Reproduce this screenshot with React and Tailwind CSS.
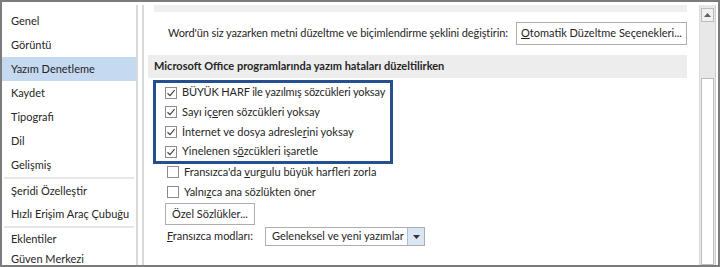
import React from "react";

const font = { fontFamily: 'Lato, "Noto Sans", sans-serif' };

const navGroups = [
  ["Genel", "Görüntü", "Yazım Denetleme", "Kaydet", "Tipografi", "Dil", "Gelişmiş"],
  ["Şeridi Özelleştir", "Hızlı Erişim Araç Çubuğu"],
  ["Eklentiler", "Güven Merkezi"],
];

function Check({ checked }) {
  return (
    <span className="w-[12px] h-[12px] border border-[#8c8c8c] bg-white flex items-center justify-center shrink-0">
      {checked && (
        <svg width="10" height="10" viewBox="0 0 10 10">
          <path d="M1.5 5.2 L4 7.6 L8.6 2.2" fill="none" stroke="#444" strokeWidth="1.2" />
        </svg>
      )}
    </span>
  );
}

function Row({ checked, h = "h-[20px]", children }) {
  return (
    <div className={`flex items-center gap-[5px] ${h} whitespace-nowrap`}>
      <Check checked={checked} />
      <span>{children}</span>
    </div>
  );
}

export default function App() {
  return (
    <div
      style={font}
      className="w-[720px] h-[267px] border-2 border-[#7c7c7c] bg-white flex pt-[3px] text-[11px] text-[#262626] overflow-hidden whitespace-nowrap"
    >
      {/* sidebar */}
      <div className="w-[136px] border-r-2 border-[#d9d9d9] pt-[4px] shrink-0">
        {navGroups.map((group, gi) => (
          <div
            key={gi}
            className={gi > 0 ? "border-t-2 border-[#e6e6e6] mx-[2px] pt-[1px]" : ""}
          >
            {group.map((item) => (
              <div
                key={item}
                className={`${gi === 0 ? "h-[24px] pl-[9px]" : gi === 1 ? "h-[23px] pl-[7px]" : "h-[20px] pl-[7px]"} flex items-center ${
                  item === "Yazım Denetleme" ? "bg-[#c5d9f1]" : ""
                }`}
              >
                {item}
              </div>
            ))}
          </div>
        ))}
      </div>

      {/* content */}
      <div className="flex-1 ml-[4px] border-l-2 border-[#d9d9d9] flex min-w-0">
        <div className="flex-1 pl-[4px] pr-[12px] min-w-0">
          <div className="h-[7px] bg-[#efefef] ml-[6px]" />
          <div className="flex items-center justify-between pl-[20px] mt-[10px] h-[23px]">
            <span className="tracking-[-0.1px]">
              Word'ün siz yazarken metni düzeltme ve biçimlendirme şeklini değiştirin:
            </span>
            <button className="h-[23px] w-[171px] border border-[#adadad] bg-white">
              <span className="underline">O</span>tomatik Düzeltme Seçenekleri...
            </button>
          </div>
          <div className="mt-[10px] h-[23px] bg-[#ededed] flex items-center pl-[6px] font-bold">
            Microsoft Office programlarında yazım hataları düzeltilirken
          </div>
          <div className="ml-[5px] mt-[2px] w-[240px] border-[3px] border-[#264f8f] pl-[9px]">
            <Row checked h="h-[19px]">
              <span className="tracking-[-0.15px]">BÜYÜK HARF ile yazılmış sözcükleri yoksay</span>
            </Row>
            <Row checked h="h-[20px]">
              Sayı iç<span className="underline">e</span>ren sözcükleri yoksay
            </Row>
            <Row checked h="h-[20px]">
              İnternet ve dosya adresle<span className="underline">r</span>ini yoksay
            </Row>
            <Row checked h="h-[19px]">
              Yinelenen s<span className="underline">ö</span>zcükleri işaretle
            </Row>
          </div>
          <div className="pl-[19px] -mt-[2px]">
            <Row>
              Fransızca'da <span className="underline">v</span>urgulu büyük harfleri zorla
            </Row>
            <Row>
              Yalnı<span className="underline">z</span>ca ana sözlükten öner
            </Row>
            <button className="mt-[1px] -ml-[2px] h-[22px] w-[90px] border border-[#adadad] bg-white">
              Özel Sözlükler...
            </button>
            <div className="flex items-center mt-[2px] h-[19px]">
              <span className="w-[98px]">
                <span className="underline">F</span>ransızca modları:
              </span>
              <div className="flex h-[19px] border border-[#abadb3] bg-white">
                <span className="pl-[6px] flex items-center w-[141px]">Geleneksel ve yeni yazımlar</span>
                <span className="w-[17px] bg-[#dbe6f4] border-l border-[#abc0dc] flex items-center justify-center">
                  <svg width="7" height="4" viewBox="0 0 7 4">
                    <path d="M0 0 H7 L3.5 4 Z" fill="#333" />
                  </svg>
                </span>
              </div>
            </div>
          </div>
        </div>

        {/* scrollbar */}
        <div className="w-[16px] bg-[#e8e8e8] border-l border-[#dcdcdc] flex flex-col shrink-0">
          <div className="h-[14px] mt-[3px] mx-[1px] border border-[#bcbcbc] bg-[#f0f0f0] flex items-center justify-center">
            <svg width="7" height="4" viewBox="0 0 7 4">
              <path d="M0 4 H7 L3.5 0 Z" fill="#606060" />
            </svg>
          </div>
          <div className="mt-[56px] flex-1 mx-[1px] border border-[#bcbcbc] bg-white" />
        </div>
        <div className="w-[3px] border-l border-[#cfcfcf] shrink-0" />
      </div>
    </div>
  );
}
